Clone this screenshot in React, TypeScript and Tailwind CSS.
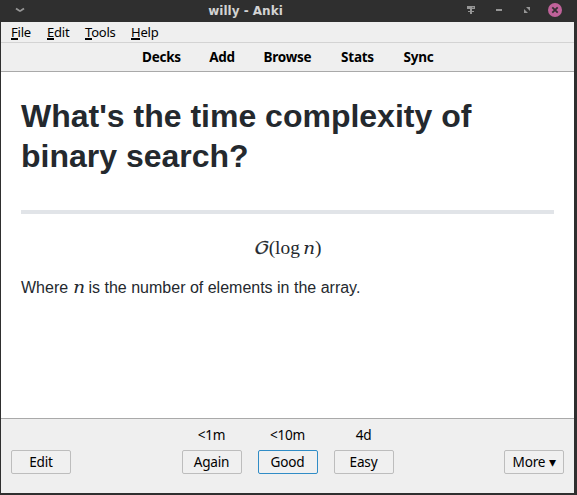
import React from "react";

const ui = "font-['Noto_Sans',sans-serif]";

const menu = [
  { key: "F", rest: "ile", box: "w-[36px]", line: "w-[7px]" },
  { key: "E", rest: "dit", box: "w-[38px]", line: "w-[7px]" },
  { key: "T", rest: "ools", box: "w-[46px]", line: "w-[7px]" },
  { key: "H", rest: "elp", box: "w-[40px]", line: "w-[9px]" },
];

const links = [
  { label: "Decks", box: "w-10" },
  { label: "Add", box: "w-[27px]" },
  { label: "Browse", box: "w-[50px]" },
  { label: "Stats", box: "w-9" },
  { label: "Sync", box: "w-8" },
];

const answers = [
  { time: "<1m", label: "Again", border: "border-[#bdbdbd]" },
  { time: "<10m", label: "Good", border: "border-[#308cc6]" },
  { time: "4d", label: "Easy", border: "border-[#bdbdbd]" },
];

function TitleBar() {
  return (
    <header className="relative h-[22px] shrink-0 bg-[#2f2f2f]">
      <div className="flex h-full items-center justify-between pr-[15px] pb-[2px] pl-[15px]">
        <svg width="10" height="6" viewBox="0 0 10 6" fill="none" stroke="#969696" strokeWidth="1.9">
          <path d="M1 1.5L4 3.5L5 4L6 3.5L9 1.5" />
        </svg>
        <div className="flex h-full items-center">
          <svg width="12" height="12" viewBox="0 0 12 12" fill="#969696">
            <path d="M2 2h8v3H7v2h2v1H7v2H5V8H3V7h2V5H2z" />
            <path d="M7.5 3h1v1h-1z" fill="#2f2f2f" />
          </svg>
          <svg className="ml-4" width="12" height="12" viewBox="0 0 12 12" fill="#969696">
            <path d="M3 5h6v2H3z" />
          </svg>
          <svg className="ml-4" width="12" height="12" viewBox="0 0 12 12" fill="#969696">
            <path d="M5 3h4v4zM3 5l4 4H3z" />
          </svg>
          <svg className="ml-[15px]" width="14" height="14" viewBox="0 0 14 14">
            <circle cx="7" cy="7" r="7" fill="#c0629a" />
            <path d="M4.3 4.3l5.4 5.4M9.7 4.3l-5.4 5.4" stroke="#363034" strokeWidth="1.8" />
          </svg>
        </div>
      </div>
      <h1 className="absolute inset-x-0 top-0 pr-[86px] text-center font-['DejaVu_Sans',sans-serif] text-[12px] leading-[22px] font-bold text-[#d3d3d3]">
        willy - Anki
      </h1>
    </header>
  );
}

function AnswerButton({ label, border }: { label: string; border: string }) {
  return (
    <button className={`flex h-6 w-[60px] items-center justify-center rounded-[2px] border ${border} bg-[#f0f0f0] text-[13.6px] tracking-[-0.2px] whitespace-nowrap`}>
      {label}
    </button>
  );
}

export default function App() {
  return (
    <div className={`flex h-[495px] w-[577px] flex-col overflow-hidden bg-[#2f2f2f] text-black ${ui}`}>
      <TitleBar />
      <div className="mr-[3px] mb-[2px] ml-px flex min-h-0 flex-1 flex-col bg-[#efefef]">
        <nav className="flex h-[21px] shrink-0 border-b border-[#d3d3d3] pl-[10px] text-[13px] leading-[21px] tracking-[-0.2px]">
          {menu.map((m) => (
            <span key={m.key} className={`relative ${m.box}`}>
              {m.key}
              {m.rest}
              <span className={`absolute top-4 left-0 h-[2px] bg-black ${m.line}`} />
            </span>
          ))}
        </nav>
        <nav className="flex h-[29px] shrink-0 items-center justify-center gap-[27px] border-b border-[#a9a9a9] pl-px text-[13.5px] font-bold tracking-[-0.25px]">
          {links.map((l) => (
            <a key={l.label} className={`flex justify-center whitespace-nowrap ${l.box}`}>{l.label}</a>
          ))}
        </nav>
        <main className="min-h-0 flex-1 bg-white px-5 pt-6 font-['Liberation_Sans',sans-serif] text-[#24292e]">
          <h2 className="text-[32px] leading-10 font-bold">
            What's the time complexity of
            <br />
            binary search?
          </h2>
          <hr className="mt-[34px] h-1 border-0 bg-[#e1e4e8]" />
          <p className="mt-[20px] flex h-7 items-baseline justify-center font-['Liberation_Serif',serif] text-[19.4px] leading-7">
            <span className="w-[15px] origin-left scale-x-[1.18] font-['DejaVu_Math_TeX_Gyre',serif] text-[17px] leading-none [-webkit-text-stroke:0.3px_#24292e]">𝒪</span>
            <span>(log</span>
            <span className="ml-[3px] inline-block w-[12px] origin-left scale-x-[1.12] font-['DejaVu_Math_TeX_Gyre',serif] text-[16.5px] leading-none">𝑛</span>
            <span>)</span>
          </p>
          <p className="mt-[14px] text-base leading-6">
            Where <span className="inline-block w-[11.5px] origin-left scale-x-[1.12] font-['DejaVu_Math_TeX_Gyre',serif] text-[16.5px] leading-none">𝑛</span> is the number of elements in the array.
          </p>
        </main>
        <footer className="flex h-[75px] shrink-0 items-start justify-between border-t border-[#a9a9a9] px-[10px] pt-[5px]">
          <div className="pt-[26px]"><AnswerButton label="Edit" border="border-[#bdbdbd]" /></div>
          <div className="flex gap-4">
            {answers.map((a) => (
              <div key={a.label} className="flex flex-col items-center">
                <span className="h-[26px] text-[13.6px] leading-[22px] tracking-[-0.2px]">{a.time}</span>
                <AnswerButton label={a.label} border={a.border} />
              </div>
            ))}
          </div>
          <div className="pt-[26px]"><AnswerButton label="More ▾" border="border-[#bdbdbd]" /></div>
        </footer>
      </div>
    </div>
  );
}
